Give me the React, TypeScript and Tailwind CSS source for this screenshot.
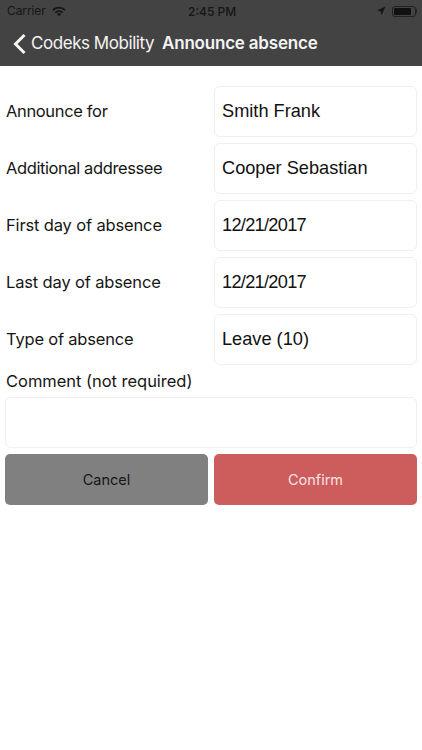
import React from "react";

const valueBox = "w-[203px] h-[51px] flex items-center pl-[7px] border border-[#efefef] rounded-[6px] text-[18.2px] text-[#111] font-['Liberation_Sans',sans-serif]";

const rows = [
  { label: "Announce for", value: "Smith Frank", labelClass: "tracking-[-0.35px]", valueClass: "" },
  { label: "Additional addressee", value: "Cooper Sebastian", labelClass: "tracking-[-0.4px]", valueClass: "" },
  { label: "First day of absence", value: "12/21/2017", labelClass: "tracking-[-0.15px]", valueClass: "tracking-[-0.7px]" },
  { label: "Last day of absence", value: "12/21/2017", labelClass: "tracking-[-0.15px]", valueClass: "tracking-[-0.7px]" },
  { label: "Type of absence", value: "Leave (10)", labelClass: "tracking-[-0.2px]", valueClass: "" },
];

export default function App() {
  return (
    <div className="w-[422px] h-[750px] bg-white overflow-hidden font-['Inter',sans-serif]">
      <div className="h-[66px] bg-[#434343] flex flex-col">
        <div className="h-[22px] flex items-center justify-between pl-[7px] pr-[5px] text-[#161616] text-[12px] relative">
          <div className="flex items-center gap-[6px]">
            <span className="tracking-[-0.1px]">Carrier</span>
            <svg width="14" height="11" viewBox="0 0 16 12" fill="#161616">
              <path d="M8 11.5 5.6 8.9a3.4 3.4 0 0 1 4.8 0z" />
              <path d="M8 4.6c-1.9 0-3.6.8-4.8 2l1.3 1.4a5 5 0 0 1 7 0l1.3-1.4A6.8 6.8 0 0 0 8 4.6z" />
              <path d="M8 .6C5 .6 2.3 1.8.4 3.8l1.3 1.4a8.9 8.9 0 0 1 12.6 0l1.3-1.4A10.9 10.9 0 0 0 8 .6z" />
            </svg>
          </div>
          <span className="absolute left-[188px] top-[3px] font-medium">2:45 PM</span>
          <div className="flex items-center gap-[6px]">
            <svg width="10" height="10" viewBox="0 0 10 10" fill="#161616">
              <path d="M9.5.5 1 4.6l3.7.7.7 3.9z" />
            </svg>
            <div className="flex items-center">
              <div className="w-[24px] h-[11px] rounded-[3px] border border-[#222] p-[1px]">
                <div className="w-[17px] h-full bg-[#111] rounded-[1px]" />
              </div>
              <div className="w-[1px] h-[4px] bg-[#222]" />
            </div>
          </div>
        </div>
        <div className="flex-1 flex items-center pl-[12px] pb-[1px] text-[#f4f4f4]">
          <svg width="15" height="22" viewBox="0 0 15 22" fill="none" stroke="#f4f4f4" strokeWidth="3">
            <path d="M12.5 2 3.5 11l9 9" />
          </svg>
          <span className="ml-[4px] text-[17px] tracking-[-0.45px]">Codeks Mobility</span>
          <span className="ml-[8px] text-[17px] font-semibold tracking-[-0.2px]">Announce absence</span>
        </div>
      </div>

      <div className="pt-5 px-[5px] flex flex-col gap-[6px]">
        {rows.map((row) => (
          <div key={row.label} className="flex items-center">
            <span className={`w-[209px] pl-[1px] text-[#161616] text-[16.5px] ${row.labelClass}`}>{row.label}</span>
            <div className={`${valueBox} ${row.valueClass}`}>{row.value}</div>
          </div>
        ))}
        <div className="h-[21px] pl-[1px] text-[#161616] text-[16.5px] tracking-[-0.03px] flex items-center">Comment (not required)</div>
        <div className="h-[51px] -mt-[1px] border border-[#efefef] rounded-[6px]" />
        <div className="flex gap-[6px]">
          <button className="w-[203px] h-[51px] bg-[#808080] rounded-[5px] text-[#161616] text-[14.5px]">Cancel</button>
          <button className="w-[203px] h-[51px] bg-[#cd5c5c] rounded-[5px] text-[#f6e4e4] text-[14.5px]">Confirm</button>
        </div>
      </div>
    </div>
  );
}
